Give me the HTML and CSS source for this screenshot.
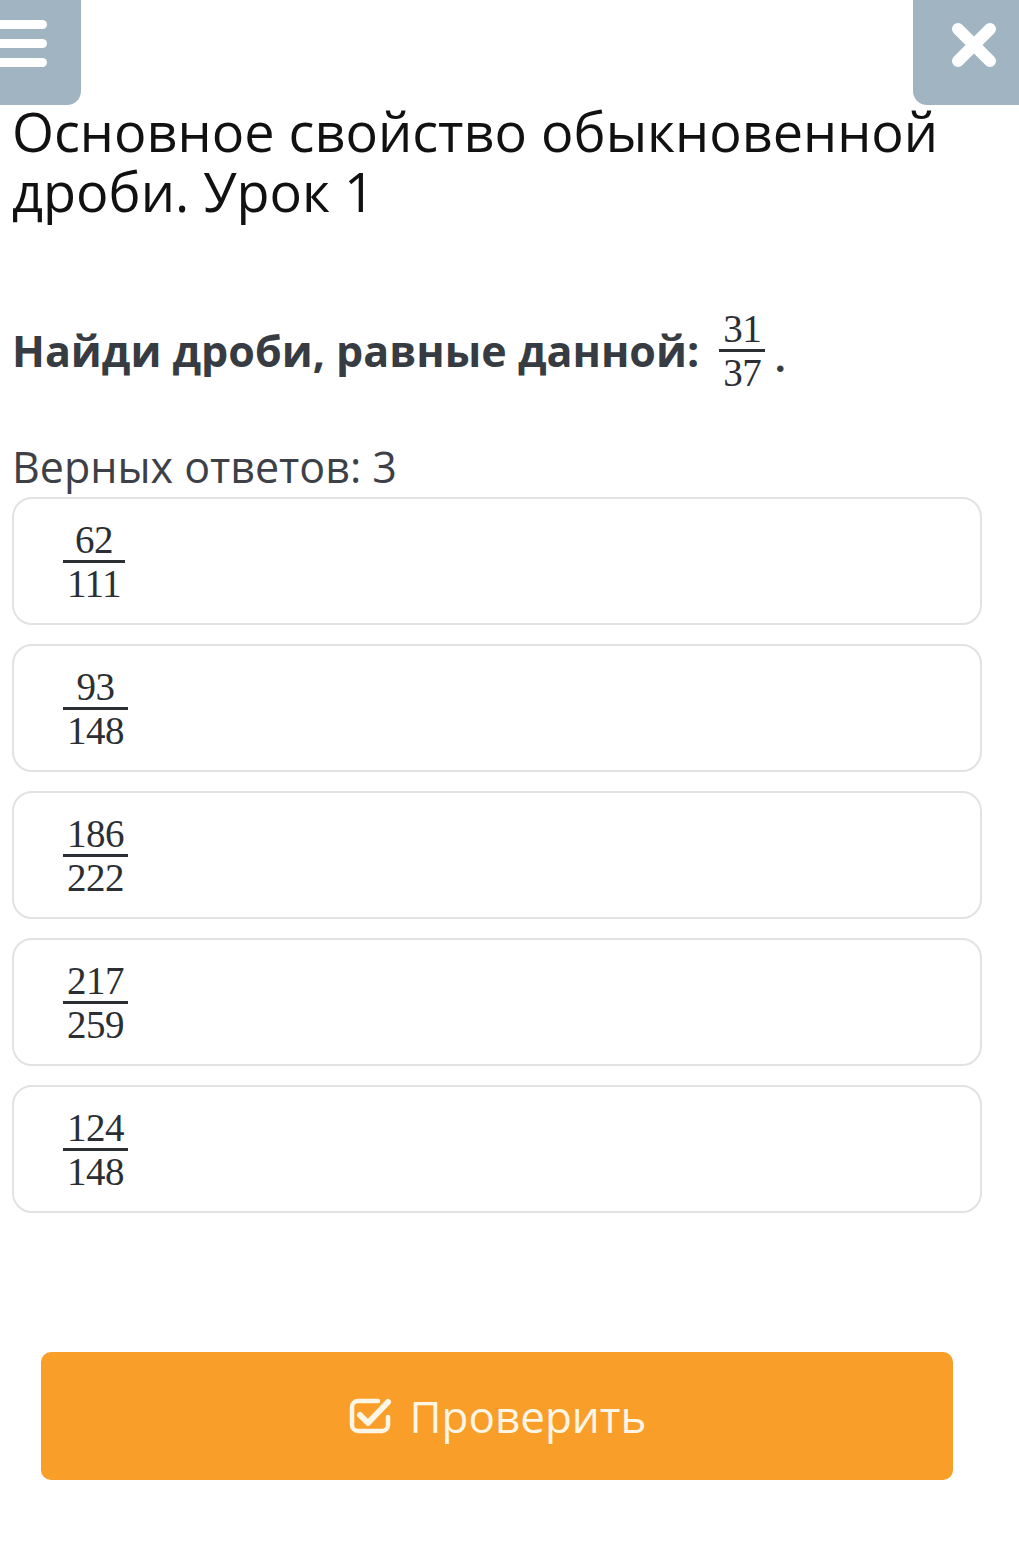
FILE: index.html
```html
<!DOCTYPE html>
<html lang="ru">
<head>
    <meta charset="UTF-8">
    <meta name="viewport" content="width=device-width, initial-scale=1.0">
    <title>Основное свойство обыкновенной дроби. Урок 1</title>
    <link rel="stylesheet" href="styles.css">
</head>
<body>
    <!-- Top bar -->
    <div class="topbar">
        <div class="menu-btn">
            <span></span>
            <span></span>
            <span></span>
        </div>
        <div class="close-btn">
            <svg width="46" height="46" viewBox="0 0 46 46">
                <path d="M7 7 L39 39 M39 7 L7 39" stroke="#fff" stroke-width="12" stroke-linecap="round"/>
            </svg>
        </div>
    </div>

    <div class="content">
        <h1>Основное свойство обыкновенной дроби. Урок 1</h1>

        <!-- Question -->
        <div class="question">
            <span class="question-text">Найди дроби, равные данной:</span>
            <span class="frac">
                <span class="num">31</span>
                <span class="bar"></span>
                <span class="den">37</span>
            </span>
            <span class="dot">.</span>
        </div>

        <div class="count">Верных ответов: 3</div>

        <!-- Answer options -->
        <div class="options">
            <div class="option">
                <span class="frac"><span class="num">62</span><span class="bar"></span><span class="den">111</span></span>
            </div>
            <div class="option">
                <span class="frac"><span class="num">93</span><span class="bar"></span><span class="den">148</span></span>
            </div>
            <div class="option">
                <span class="frac"><span class="num">186</span><span class="bar"></span><span class="den">222</span></span>
            </div>
            <div class="option">
                <span class="frac"><span class="num">217</span><span class="bar"></span><span class="den">259</span></span>
            </div>
            <div class="option">
                <span class="frac"><span class="num">124</span><span class="bar"></span><span class="den">148</span></span>
            </div>
        </div>

        <button class="check-btn">
            <svg width="46" height="42" viewBox="0 0 46 42">
                <path d="M30 8 H10 a6 6 0 0 0 -6 6 V32 a6 6 0 0 0 6 6 H34 a6 6 0 0 0 6 -6 V24" fill="none" stroke="#fdf5e6" stroke-width="4.5" stroke-linecap="round"/>
                <path d="M12 22 L20 30 L40 9" fill="none" stroke="#fdf5e6" stroke-width="6" stroke-linecap="round" stroke-linejoin="round"/>
            </svg>
            <span>Проверить</span>
        </button>
    </div>
</body>
</html>
```

FILE: styles.css
```css
body {
    font-family: "Open Sans", "Noto Sans", sans-serif;
    background-color: #fff;
    margin: 0;
}

/* Top bar with menu and close buttons */
.topbar {
    display: flex;
    justify-content: space-between;
    height: 105px;
}

.menu-btn {
    width: 81px;
    height: 105px;
    background-color: #a1b4c2;
    border-bottom-right-radius: 14px;
    display: flex;
    flex-direction: column;
    gap: 10px;
    padding-top: 20px;
    box-sizing: border-box;
}

.menu-btn span {
    display: block;
    width: 47px;
    height: 9px;
    background-color: #fff;
    border-radius: 0 5px 5px 0;
}

.close-btn {
    width: 106px;
    height: 105px;
    background-color: #a1b4c2;
    border-bottom-left-radius: 14px;
    display: flex;
    justify-content: center;
    padding: 22px 0 0 16px;
    box-sizing: border-box;
}

.content {
    padding: 0 37px 0 12px;
}

h1 {
    font-size: 54px;
    font-weight: 400;
    line-height: 60px;
    color: #111;
    margin: -4px 0 0;
}

/* Question line */
.question {
    display: flex;
    align-items: center;
    margin-top: 92px;
    color: #373b42;
}

.question-text {
    font-size: 43px;
    font-weight: 700;
    line-height: 1;
    margin-right: 20px;
}

.dot {
    font-family: "Liberation Serif", serif;
    font-size: 40px;
    font-weight: 700;
    align-self: center;
    margin-top: 16px;
    margin-left: 10px;
}

/* Fractions */
.frac {
    display: inline-flex;
    flex-direction: column;
    align-items: stretch;
    font-family: "Liberation Serif", "DejaVu Serif", serif;
    font-size: 39px;
    color: #2b2f34;
    text-align: center;
}

.frac .num,
.frac .den {
    display: block;
    line-height: 31px;
    padding: 0 4px;
    letter-spacing: -0.5px;
}

.frac .num {
    padding-bottom: 5px;
}

.frac .den {
    padding-top: 5px;
}

.frac .bar {
    display: block;
    height: 3px;
    background-color: #2b2f34;
}

.count {
    font-size: 43px;
    line-height: 1;
    color: #3d4047;
    margin-top: 57px;
}

/* Options */
.options {
    display: flex;
    flex-direction: column;
    gap: 19px;
    margin-top: 9px;
}

.option {
    height: 128px;
    box-sizing: border-box;
    border: 2px solid #e2e2e2;
    border-radius: 20px;
    display: flex;
    align-items: center;
    padding-left: 49px;
}

/* Check button */
.check-btn {
    display: flex;
    align-items: center;
    justify-content: center;
    gap: 16px;
    width: 912px;
    height: 128px;
    margin: 139px 0 0 29px;
    background-color: #f99f29;
    border: none;
    border-radius: 10px;
    color: #fdf5e6;
    font-family: "Open Sans", "Noto Sans", sans-serif;
    font-size: 44px;
    cursor: pointer;
}

.check-btn svg {
    margin-top: -4px;
}
```
